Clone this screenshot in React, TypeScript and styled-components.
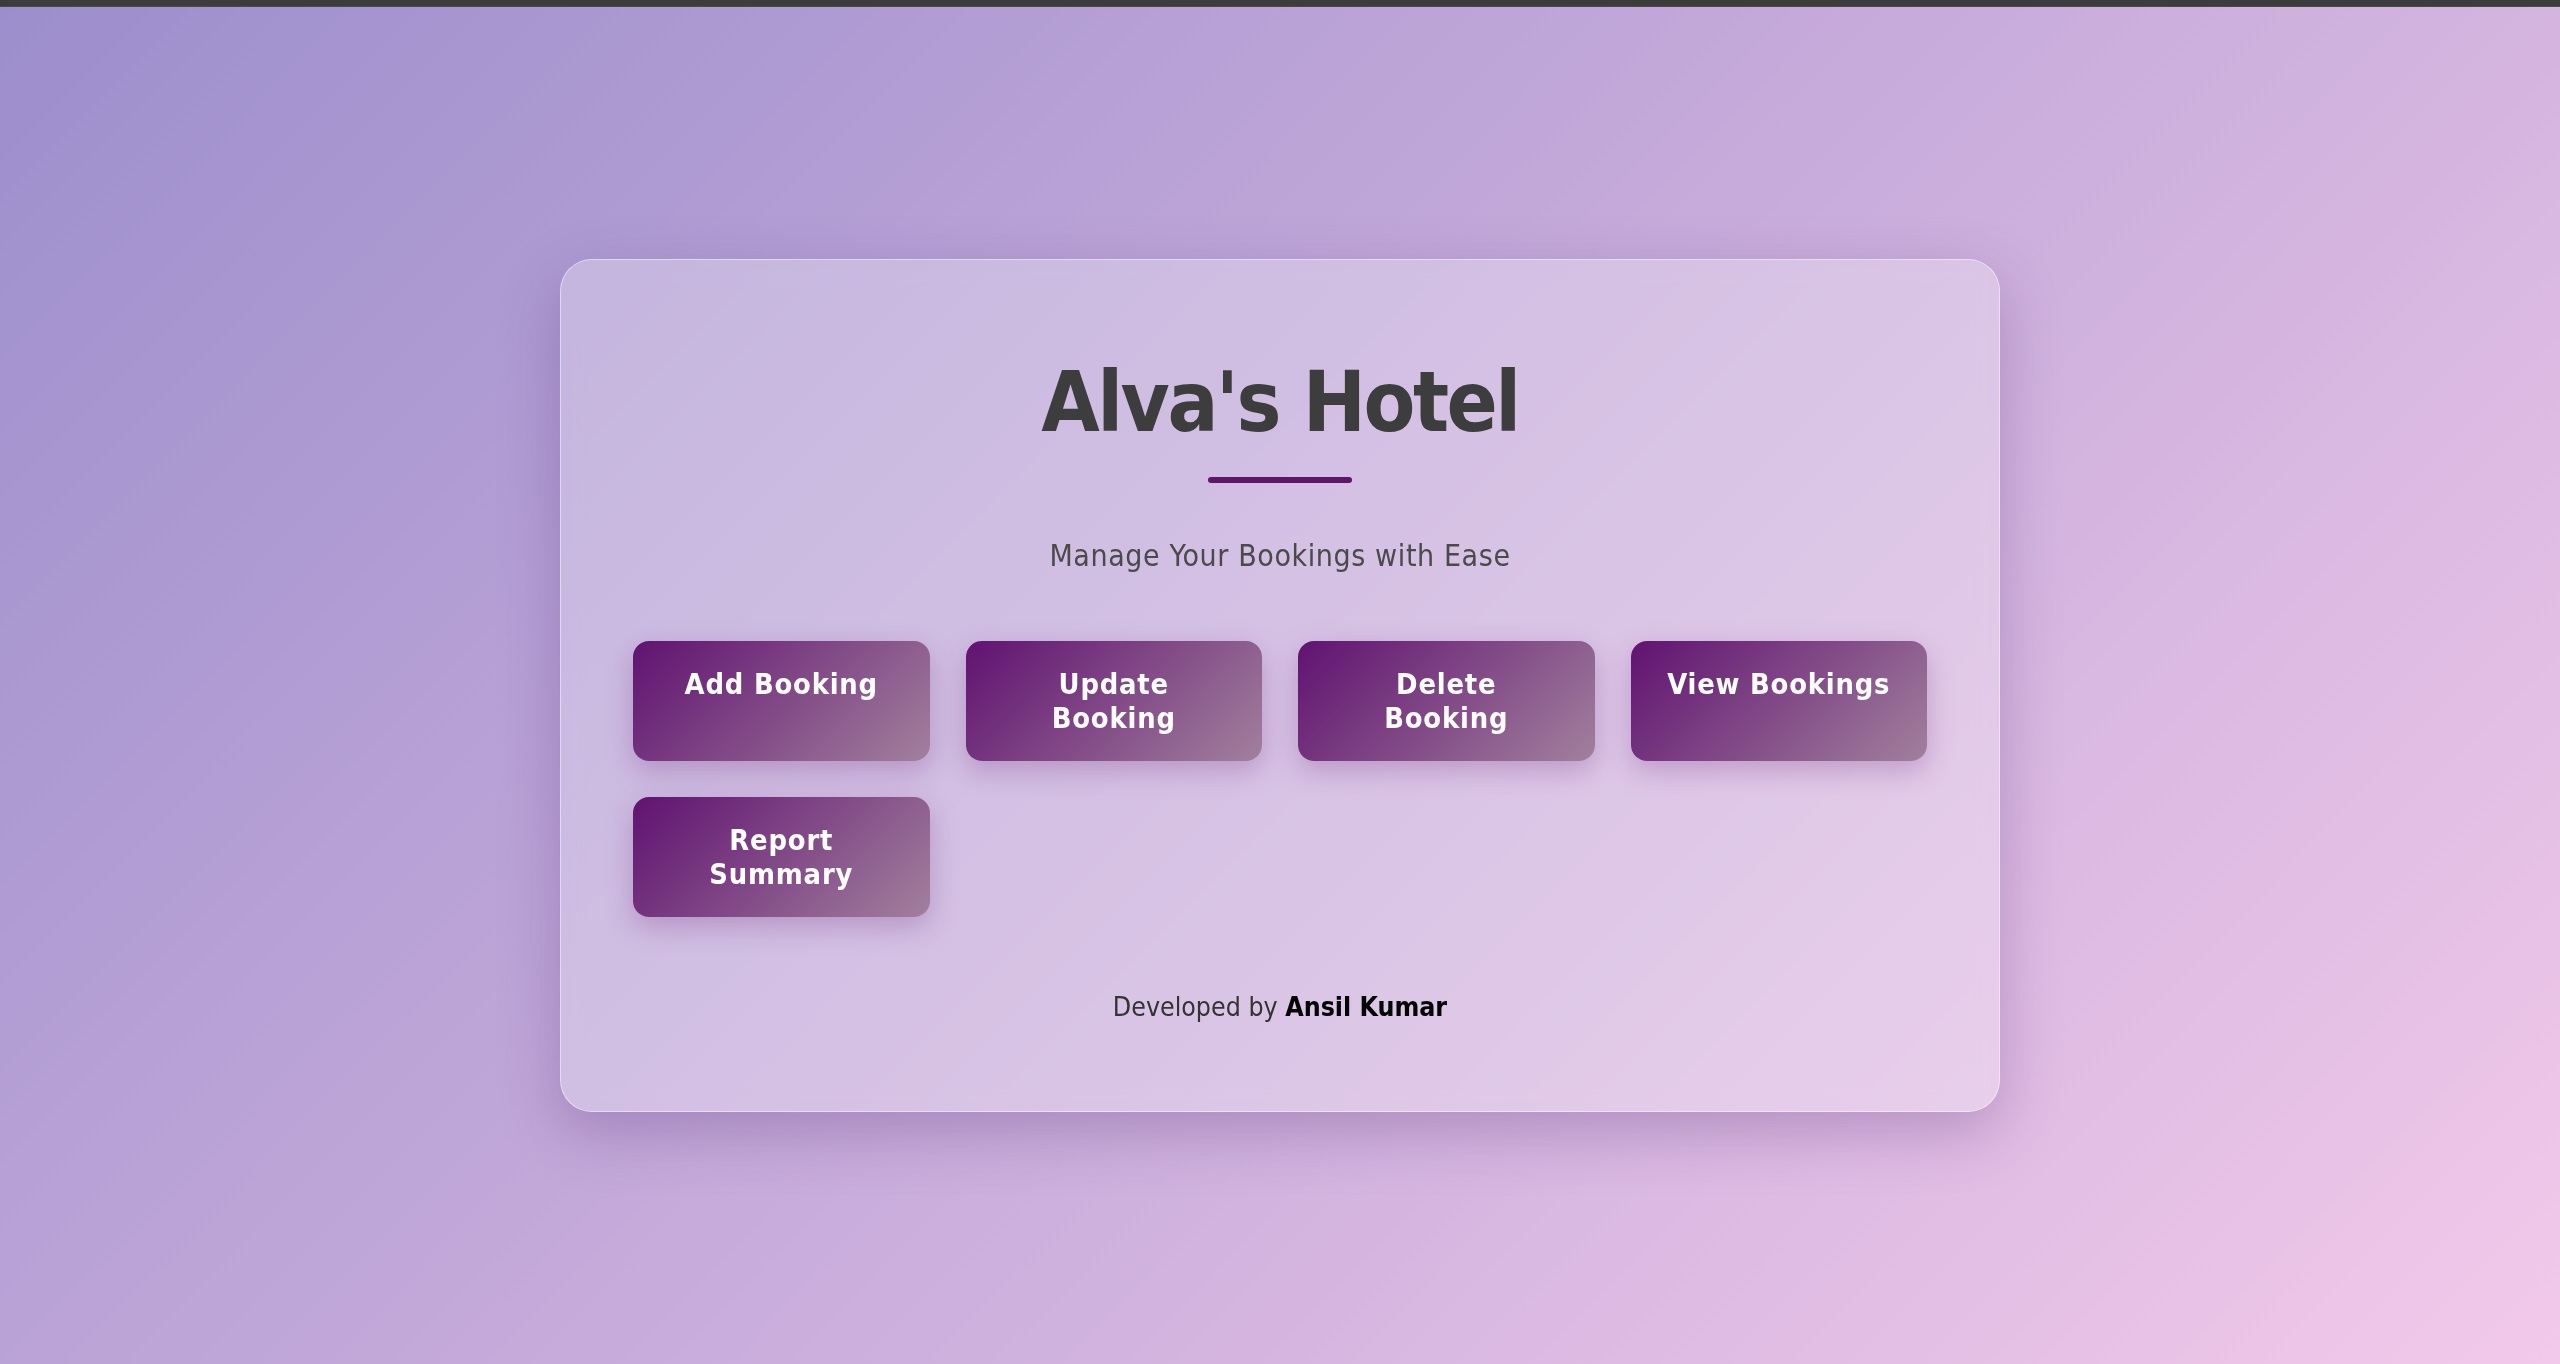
import React from "react";
import styled, { createGlobalStyle } from "styled-components";

const GlobalStyle = createGlobalStyle`
  * { box-sizing: border-box; }
  html, body { margin: 0; padding: 0; }
  body {
    font-family: "DejaVu Sans Condensed", "DejaVu Sans", sans-serif;
    font-stretch: condensed;
    background: linear-gradient(135deg, #9c8ecc 0%, #f2c9ea 100%);
    min-height: 100vh;
  }
`;

const Page = styled.div`
  min-height: 100vh;
  display: flex;
  flex-direction: column;
`;

const TopBar = styled.div`
  height: 7px;
  background: #3c3c3c;
  border-bottom: 1px solid #4a4a4a;
  flex-shrink: 0;
`;

const Main = styled.main`
  flex: 1;
  display: flex;
  align-items: center;
  justify-content: center;
`;

const Card = styled.section`
  width: 1440px;
  padding: 100px 72px 87px;
  border-radius: 32px;
  background: rgba(255, 255, 255, 0.27);
  border: 1px solid rgba(255, 255, 255, 0.45);
  box-shadow: 0 20px 60px rgba(80, 40, 110, 0.28);
  backdrop-filter: blur(10px);
  display: flex;
  flex-direction: column;
  align-items: stretch;
`;

const Header = styled.header`
  display: flex;
  flex-direction: column;
  align-items: center;
`;

const Title = styled.h1`
  margin: 0;
  font-size: 84px;
  line-height: 84px;
  font-weight: 700;
  color: #3d3d3d;
  letter-spacing: -2.5px;
`;

const Accent = styled.div`
  margin-top: 33px;
  width: 144px;
  height: 6.4px;
  border-radius: 4px;
  background: #611569;
`;

const Subtitle = styled.p`
  margin: 56px 0 0;
  font-size: 30px;
  line-height: 34.56px;
  letter-spacing: 0.6px;
  color: #4a4a4a;
`;

const ButtonGrid = styled.nav`
  margin-top: 67px;
  display: grid;
  grid-template-columns: repeat(4, 1fr);
  gap: 36px;
`;

const ActionButton = styled.button`
  font-family: inherit;
  font-stretch: inherit;
  font-size: 28.8px;
  line-height: 34.56px;
  letter-spacing: 0.8px;
  font-weight: 700;
  color: #ffffff;
  text-align: center;
  padding: 26px 34px 25px;
  border: none;
  border-radius: 16px;
  background: linear-gradient(135deg, #601270 0%, #a2809d 100%);
  box-shadow: 0 10px 28px rgba(110, 40, 120, 0.28);
  cursor: pointer;
  display: flex;
  align-items: flex-start;
  justify-content: center;
`;

const Footer = styled.footer`
  margin-top: 73px;
  text-align: center;
  font-size: 26.5px;
  line-height: 34.56px;
  color: #333333;
`;

const Author = styled.strong`
  color: #000000;
  font-weight: 700;
`;

const actions = [
  "Add Booking",
  "Update Booking",
  "Delete Booking",
  "View Bookings",
  "Report Summary",
];

export default function App() {
  return (
    <>
      <GlobalStyle />
      <Page>
        <TopBar />
        <Main>
          <Card>
            <Header>
              <Title>Alva's Hotel</Title>
              <Accent />
              <Subtitle>Manage Your Bookings with Ease</Subtitle>
            </Header>
            <ButtonGrid>
              {actions.map((a) => (
                <ActionButton key={a} type="button">
                  {a}
                </ActionButton>
              ))}
            </ButtonGrid>
            <Footer>
              Developed by <Author>Ansil Kumar</Author>
            </Footer>
          </Card>
        </Main>
      </Page>
    </>
  );
}
